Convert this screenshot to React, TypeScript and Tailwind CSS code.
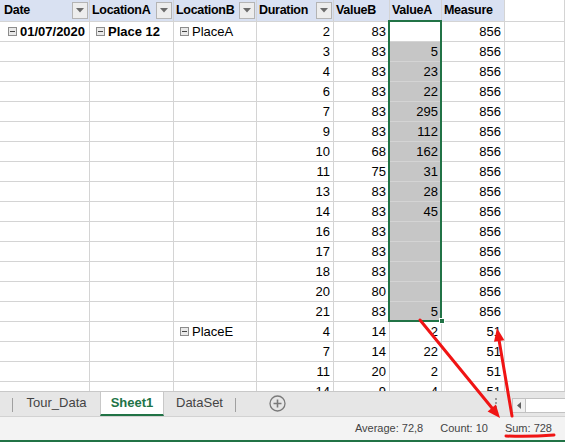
import React from 'react'

type Row = { date?: string; locA?: string; locB?: string; dur: number; vb: number; va: string; m: number }

const rows: Row[] = [
  { date: '01/07/2020', locA: 'Place 12', locB: 'PlaceA', dur: 2, vb: 83, va: '', m: 856 },
  { dur: 3, vb: 83, va: '5', m: 856 },
  { dur: 4, vb: 83, va: '23', m: 856 },
  { dur: 6, vb: 83, va: '22', m: 856 },
  { dur: 7, vb: 83, va: '295', m: 856 },
  { dur: 9, vb: 83, va: '112', m: 856 },
  { dur: 10, vb: 68, va: '162', m: 856 },
  { dur: 11, vb: 75, va: '31', m: 856 },
  { dur: 13, vb: 83, va: '28', m: 856 },
  { dur: 14, vb: 83, va: '45', m: 856 },
  { dur: 16, vb: 83, va: '', m: 856 },
  { dur: 17, vb: 83, va: '', m: 856 },
  { dur: 18, vb: 83, va: '', m: 856 },
  { dur: 20, vb: 80, va: '', m: 856 },
  { dur: 21, vb: 83, va: '5', m: 856 },
  { locB: 'PlaceE', dur: 4, vb: 14, va: '2', m: 51 },
  { dur: 7, vb: 14, va: '22', m: 51 },
  { dur: 11, vb: 20, va: '2', m: 51 },
  { dur: 14, vb: 9, va: '4', m: 51 },
]

const cell = 'h-full shrink-0 border-r border-[#d4d4d4] flex items-center'

function Collapse() {
  return (
    <span className="mr-[3px] flex h-[9px] w-[9px] shrink-0 items-center justify-center border border-[#8c8c8c] bg-[#e9e9e9]">
      <span className="h-px w-[5px] bg-[#444]" />
    </span>
  )
}

function FilterBtn() {
  return (
    <span className="flex h-[17px] w-[16px] shrink-0 items-center justify-center border border-[#b4b4b4] bg-[#ededed]">
      <svg width="8" height="5" viewBox="0 0 8 5">
        <path d="M0 0h8L4 4.5z" fill="#6b6b6b" />
      </svg>
    </span>
  )
}

export default function App() {
  return (
    <div
      className="relative flex h-[442px] w-[565px] flex-col overflow-hidden bg-white text-black"
      style={{ fontFamily: '"Liberation Sans", Arial, sans-serif' }}
    >
      <div className="h-[391px] shrink-0 overflow-hidden text-[13px]">
        <div className="flex h-[22px] border-b border-[#d4d4d4] text-[12.5px] font-bold tracking-[-0.3px]">
          <div className={`${cell} w-[90px] justify-between bg-[#d9e1f2] pl-[4px] pr-px`}>
            Date <FilterBtn />
          </div>
          <div className={`${cell} w-[84px] justify-between bg-[#d9e1f2] pl-[2px] pr-px`}>
            LocationA <FilterBtn />
          </div>
          <div className={`${cell} w-[83px] justify-between bg-[#d9e1f2] pl-[2px] pr-px`}>
            LocationB <FilterBtn />
          </div>
          <div className={`${cell} w-[77px] justify-between bg-[#d9e1f2] pl-[2px] pr-px`}>
            Duration <FilterBtn />
          </div>
          <div className={`${cell} w-[56px] bg-[#d9e1f2] pl-[2px]`}>ValueB</div>
          <div className={`${cell} w-[52px] bg-[#d9e1f2] pl-[2px]`}>ValueA</div>
          <div className={`${cell} w-[63px] bg-[#d9e1f2] pl-[2px]`}>Measure</div>
          <div className={`${cell} flex-1`} />
        </div>
        {rows.map((r, i) => (
          <div key={i} className="flex h-[20px] border-b border-[#d4d4d4]">
            <div className={`${cell} w-[90px] pl-[8px] font-bold`}>
              {r.date && (
                <>
                  <Collapse />
                  {r.date}
                </>
              )}
            </div>
            <div className={`${cell} w-[84px] pl-[6px] font-bold`}>
              {r.locA && (
                <>
                  <Collapse />
                  {r.locA}
                </>
              )}
            </div>
            <div className={`${cell} w-[83px] pl-[6px]`}>
              {r.locB && (
                <>
                  <Collapse />
                  {r.locB}
                </>
              )}
            </div>
            <div className={`${cell} w-[77px] justify-end pr-[3px]`}>{r.dur}</div>
            <div className={`${cell} w-[56px] justify-end pr-[3px]`}>{r.vb}</div>
            <div
              className={`${cell} w-[52px] justify-end pr-[3px] ${i >= 1 && i <= 14 ? 'bg-[#c6c6c6]' : ''}`}
            >
              {r.va}
            </div>
            <div className={`${cell} w-[63px] justify-end pr-[3px]`}>{r.m}</div>
            <div className={`${cell} flex-1`} />
          </div>
        ))}
      </div>

      {/* sheet tabs */}
      <div className="flex h-[25px] shrink-0 items-stretch border-t border-[#c8c8c8] bg-[#e6e6e6] text-[13px] text-[#444]">
        <div className="ml-[12px] mt-[6px] h-[14px] w-px bg-[#a0a0a0]" />
        <div className="flex w-[87px] items-center justify-center pb-[2px]">Tour_Data</div>
        <div className="flex w-[64px] items-center justify-center border-x border-[#c8c8c8] border-b-2 border-b-[#217346] bg-white font-bold text-[#217346]">
          Sheet1
        </div>
        <div className="flex w-[71px] items-center justify-center pb-[2px]">DataSet</div>
        <div className="mt-[6px] h-[14px] w-px bg-[#a0a0a0]" />
        <div className="ml-[33px] flex items-center pb-[2px]">
          <svg width="17" height="17" viewBox="0 0 17 17">
            <circle cx="8.5" cy="8.5" r="7.5" fill="none" stroke="#7a7a7a" strokeWidth="1.3" />
            <path d="M8.5 4.5v8M4.5 8.5h8" stroke="#7a7a7a" strokeWidth="1.6" />
          </svg>
        </div>
        <div className="ml-auto mr-[15px] flex flex-col justify-center gap-[2px] pb-[2px]">
          <span className="h-[2px] w-[2px] bg-[#9a9a9a]" />
          <span className="h-[2px] w-[2px] bg-[#9a9a9a]" />
          <span className="h-[2px] w-[2px] bg-[#9a9a9a]" />
        </div>
        <div className="mb-[3px] mt-[6px] flex w-[53px] border border-r-0 border-[#c2c2c2] bg-white">
          <div className="flex w-[13px] items-center justify-center border-r border-[#c2c2c2] bg-[#f0f0f0]">
            <svg width="4" height="7" viewBox="0 0 4 7">
              <path d="M4 0v7L0 3.5z" fill="#606060" />
            </svg>
          </div>
        </div>
      </div>

      {/* status bar */}
      <div className="flex h-[26px] shrink-0 items-center justify-end gap-[17px] border-t border-[#d2d2d2] border-b-2 border-b-[#217346] bg-[#f3f3f3] pr-[13px] text-[11px] text-[#444]">
        <span>Average: 72,8</span>
        <span>Count: 10</span>
        <span>Sum: 728</span>
      </div>

      {/* selection */}
      <div className="pointer-events-none absolute left-[388px] top-[20px] h-[302px] w-[54px] border-2 border-[#217346]" />
      <div className="pointer-events-none absolute left-[439px] top-[318px] h-[6px] w-[6px] border border-white bg-[#217346]" />

      {/* annotations */}
      <svg className="pointer-events-none absolute left-0 top-0" width="565" height="442" viewBox="0 0 565 442">
        <g stroke="#f01414" strokeWidth="3" strokeLinecap="round" fill="#f01414">
          <line x1="420" y1="320" x2="492" y2="408" />
          <polygon points="500,418 487.6,411.4 495.9,404.6" stroke="none" />
          <line x1="512" y1="416" x2="499.2" y2="341" />
          <polygon points="497,328 504.4,340.2 494,341.8" stroke="none" />
          <path d="M506 436 Q530 437 554 435" fill="none" />
        </g>
      </svg>
    </div>
  )
}
